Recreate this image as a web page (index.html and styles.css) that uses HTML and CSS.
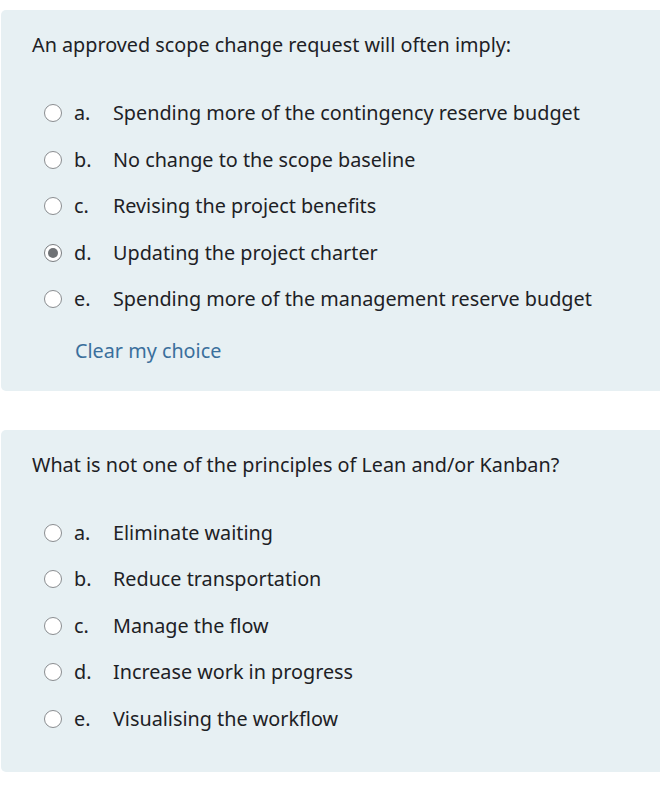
FILE: index.html
```html
<!DOCTYPE html>
<html>
<head>
<meta charset="utf-8">
<link rel="stylesheet" href="styles.css">
</head>
<body>
<div class="page">
  <div class="card">
    <div class="qtext">An approved scope change request will often imply:</div>
    <div class="answers">
      <div class="opt"><span class="radio"></span><span class="num">a.</span><span class="lbl">Spending more of the contingency reserve budget</span></div>
      <div class="opt"><span class="radio"></span><span class="num">b.</span><span class="lbl">No change to the scope baseline</span></div>
      <div class="opt"><span class="radio"></span><span class="num">c.</span><span class="lbl">Revising the project benefits</span></div>
      <div class="opt"><span class="radio checked"></span><span class="num">d.</span><span class="lbl">Updating the project charter</span></div>
      <div class="opt"><span class="radio"></span><span class="num">e.</span><span class="lbl">Spending more of the management reserve budget</span></div>
    </div>
    <div class="clear">Clear my choice</div>
  </div>
  <div class="card second">
    <div class="qtext">What is not one of the principles of Lean and/or Kanban?</div>
    <div class="answers">
      <div class="opt"><span class="radio"></span><span class="num">a.</span><span class="lbl">Eliminate waiting</span></div>
      <div class="opt"><span class="radio"></span><span class="num">b.</span><span class="lbl">Reduce transportation</span></div>
      <div class="opt"><span class="radio"></span><span class="num">c.</span><span class="lbl">Manage the flow</span></div>
      <div class="opt"><span class="radio"></span><span class="num">d.</span><span class="lbl">Increase work in progress</span></div>
      <div class="opt"><span class="radio"></span><span class="num">e.</span><span class="lbl">Visualising the workflow</span></div>
    </div>
  </div>
</div>
```
FILE: styles.css
```css
html, body {
  margin: 0;
  padding: 0;
  background: #ffffff;
  overflow: hidden;
}
body {
  font-family: "Noto Sans", "Open Sans", sans-serif;
  font-size: 19.8px;
  color: #1d2125;
}
.page {
  padding-top: 10px;
  padding-left: 1px;
  margin-right: -30px;
}
.card {
  background: #e7f0f3;
  border-radius: 5px;
  padding: 20px 0 25px 31px;
}
.card.second {
  margin-top: 39px;
  padding-bottom: 30px;
}
.qtext {
  line-height: 30px;
}
.answers {
  margin-top: 30px;
}
.opt {
  display: flex;
  align-items: center;
  height: 46.5px;
  line-height: 30px;
}
.radio {
  width: 16px;
  height: 16px;
  border: 1.5px solid #8a8d90;
  border-radius: 50%;
  background: #ffffff;
  margin-left: 12px;
  box-sizing: content-box;
  position: relative;
  flex: none;
}
.radio.checked {
  border-color: #7a7d80;
}
.radio.checked::after {
  content: "";
  position: absolute;
  left: 3px;
  top: 3px;
  width: 10px;
  height: 10px;
  border-radius: 50%;
  background: #6f7275;
}
.num {
  margin-left: 12px;
  width: 39px;
  flex: none;
}
.clear {
  margin-top: 13px;
  margin-left: 43px;
  line-height: 30px;
  color: #3a6f9c;
}
```
